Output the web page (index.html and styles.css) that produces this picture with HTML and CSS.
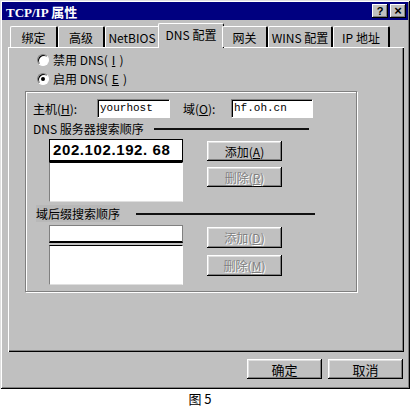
FILE: index.html
```html
<!DOCTYPE html>
<html lang="zh-CN">
<head>
  <meta charset="UTF-8" />
  <title>TCP/IP 属性</title>
  <link rel="stylesheet" href="styles.css">
</head>
<body>
  <div class="window">
    <div class="titlebar">
      <span class="title">TCP/IP 属性</span>
      <div class="caption-btns">
        <span class="cbtn">?</span>
        <span class="cbtn close">×</span>
      </div>
    </div>

    <div class="tabs">
      <div class="tab w1">绑定</div>
      <div class="tab w2">高级</div>
      <div class="tab w3">NetBIOS</div>
      <div class="tab w4 active">DNS 配置</div>
      <div class="tab w5">网关</div>
      <div class="tab w6">WINS 配置</div>
      <div class="tab w7">IP 地址</div>
    </div>

    <div class="panel">
      <div class="radios">
        <label class="radio-row"><span class="radio"></span>禁用 DNS(<u>I</u>)</label>
        <label class="radio-row"><span class="radio checked"></span>启用 DNS(<u>E</u>)</label>
      </div>

      <div class="group">
        <div class="host-row">
          <span class="lbl host-lbl">主机(<u>H</u>):</span>
          <div class="field host-field">yourhost</div>
          <span class="lbl domain-lbl">域(<u>O</u>):</span>
          <div class="field domain-field">hf.oh.cn</div>
        </div>

        <div class="section-title">
          <span>DNS 服务器搜索顺序</span>
          <span class="rule rule1"></span>
        </div>
        <div class="list-row">
          <div class="list-col">
            <div class="edit big">202.102.192. 68</div>
            <div class="listbox lb1"></div>
          </div>
          <div class="btn-col">
            <button class="btn">添加(<u>A</u>)</button>
            <button class="btn disabled">删除(<u>R</u>)</button>
          </div>
        </div>

        <div class="section-title second">
          <span class="shaded">域后缀搜索顺序</span>
          <span class="rule rule2"></span>
        </div>
        <div class="list-row second">
          <div class="list-col">
            <div class="edit small"></div>
            <div class="listbox lb2"></div>
          </div>
          <div class="btn-col second">
            <button class="btn disabled">添加(<u>D</u>)</button>
            <button class="btn disabled">删除(<u>M</u>)</button>
          </div>
        </div>
      </div>
    </div>

    <div class="footer">
      <button class="btn wide">确定</button>
      <button class="btn wide">取消</button>
    </div>
  </div>
  <div class="caption">图 5</div>
</body>
</html>
```

FILE: styles.css
```css
body {
  margin: 0;
  background: #fff;
  font-family: "Noto Sans CJK SC", sans-serif;
  font-size: 12px;
  color: #000;
}
u {
  text-decoration: underline;
}
.window {
  width: 410px;
  height: 389px;
  box-sizing: border-box;
  padding: 2px;
  background: #c0c0c0;
  box-shadow: inset 1px 1px #dfdfdf, inset -1px -1px #000, inset 2px 2px #fff, inset -2px -2px #808080;
}
.titlebar {
  height: 18px;
  background: #000080;
  color: #fff;
  display: flex;
  align-items: center;
  justify-content: space-between;
  padding: 0 2px 0 4px;
}
.title {
  font-family: "Liberation Serif", "Noto Sans CJK SC", serif;
  font-weight: bold;
  font-size: 13px;
}
.caption-btns {
  display: flex;
  gap: 2px;
}
.cbtn {
  width: 16px;
  height: 14px;
  box-sizing: border-box;
  background: #c0c0c0;
  color: #000;
  font-family: "Liberation Sans", sans-serif;
  font-weight: bold;
  font-size: 11px;
  line-height: 14px;
  text-align: center;
  box-shadow: inset -1px -1px #000, inset 1px 1px #fff, inset -2px -2px #808080;
}
.cbtn.close {
  font-size: 13px;
}
.tabs {
  display: flex;
  align-items: flex-end;
  height: 27px;
  padding-left: 8px;
  position: relative;
  z-index: 1;
}
.tab {
  height: 21px;
  box-sizing: border-box;
  display: flex;
  align-items: center;
  justify-content: center;
  background: #c0c0c0;
  border-top: 1px solid #fff;
  border-left: 1px solid #fff;
  border-right: 2px solid #000;
  border-radius: 2px 2px 0 0;
}
.w1 { width: 48px; }
.w2 { width: 47px; }
.w3 { width: 55px; }
.w4 { width: 66px; }
.w5 { width: 46px; }
.w6 { width: 65px; }
.w7 { width: 57px; }
.tab.active {
  height: 25px;
  margin: 0 -2px -1px;
  padding-bottom: 3px;
  border-right: 1px solid #000;
}
.panel {
  height: 305px;
  margin: 0 4px 0 6px;
  box-sizing: border-box;
  box-shadow: inset 1px 1px #fff, inset -1px -1px #000, inset -2px -2px #808080;
  padding-top: 3px;
}
.radios {
  padding-left: 29px;
}
.radio-row {
  display: flex;
  align-items: center;
  gap: 4px;
  height: 19px;
}
.radio {
  width: 12px;
  height: 12px;
  box-sizing: border-box;
  border-radius: 50%;
  background: #fff;
  border: 1px solid;
  border-color: #808080 #fff #fff #808080;
  box-shadow: inset 1px 1px #000;
  display: flex;
  align-items: center;
  justify-content: center;
}
.radio.checked::after {
  content: "";
  width: 4px;
  height: 4px;
  border-radius: 50%;
  background: #000;
}
.group {
  width: 332px;
  height: 201px;
  box-sizing: border-box;
  margin: 3px 0 0 17px;
  border: 1px solid #808080;
  box-shadow: inset 1px 1px #fff, 1px 1px #fff;
  padding: 7px 0 0 7px;
}
.host-row {
  display: flex;
  align-items: center;
  height: 19px;
}
.lbl {
  white-space: nowrap;
}
.host-lbl { width: 64px; }
.domain-lbl { width: 48px; margin-left: 13px; }
.field {
  height: 19px;
  box-sizing: border-box;
  background: #fff;
  border: 1px solid;
  border-color: #808080 #fff #fff #808080;
  box-shadow: inset 1px 1px #000;
  font-family: "Liberation Mono", monospace;
  font-size: 11px;
  line-height: 17px;
  padding-left: 2px;
}
.host-field { width: 73px; }
.domain-field { width: 82px; }
.section-title {
  display: flex;
  align-items: center;
  gap: 10px;
  height: 17px;
  margin-top: 2px;
}
.rule {
  height: 2px;
  background: #111;
}
.rule1 { width: 155px; }
.rule2 { width: 179px; margin-left: 6px; }
.section-title.second {
  margin-top: 3px;
  padding-left: 3px;
}
.shaded {
  background: #b8b8b8;
}
.list-row {
  display: flex;
  gap: 24px;
  margin: 2px 0 0 16px;
}
.list-row.second {
  margin-top: 3px;
}
.list-col {
  width: 134px;
}
.edit {
  box-sizing: border-box;
  background: #fff;
  border: 1px solid #000;
  border-bottom-width: 2px;
}
.edit.big {
  height: 23px;
  font-family: "Liberation Sans", sans-serif;
  font-weight: bold;
  font-size: 15px;
  letter-spacing: 0.6px;
  line-height: 20px;
  padding-left: 3px;
  white-space: pre;
  overflow: hidden;
}
.edit.small {
  height: 18px;
  border-color: #808080;
  border-bottom-color: #000;
}
.listbox {
  box-sizing: border-box;
  background: #fff;
  border: 1px solid;
  border-color: #000 #fff #dfdfdf #808080;
}
.lb1 { height: 40px; }
.lb2 { height: 40px; margin-top: 2px; }
.btn-col {
  display: flex;
  flex-direction: column;
  gap: 6px;
  padding-top: 2px;
}
.btn-col.second {
  gap: 7px;
}
.btn {
  width: 75px;
  height: 20px;
  padding: 0;
  border: none;
  background: #c0c0c0;
  font-family: "Noto Sans CJK SC", sans-serif;
  font-size: 12px;
  color: #000;
  box-shadow: inset -1px -1px #000, inset 1px 1px #fff, inset -2px -2px #808080, inset 2px 2px #dfdfdf;
}
.btn-col.second .btn {
  height: 21px;
}
.btn.disabled {
  color: #808080;
  text-shadow: 1px 1px #fff;
}
.footer {
  display: flex;
  justify-content: flex-end;
  gap: 6px;
  margin: 7px 5px 0 0;
}
.btn.wide {
  width: 75px;
  height: 20px;
  font-size: 13px;
}
.caption {
  width: 410px;
  box-sizing: border-box;
  padding-right: 10px;
  text-align: center;
  margin-top: 2px;
  font-size: 13px;
  line-height: 16px;
}
```
